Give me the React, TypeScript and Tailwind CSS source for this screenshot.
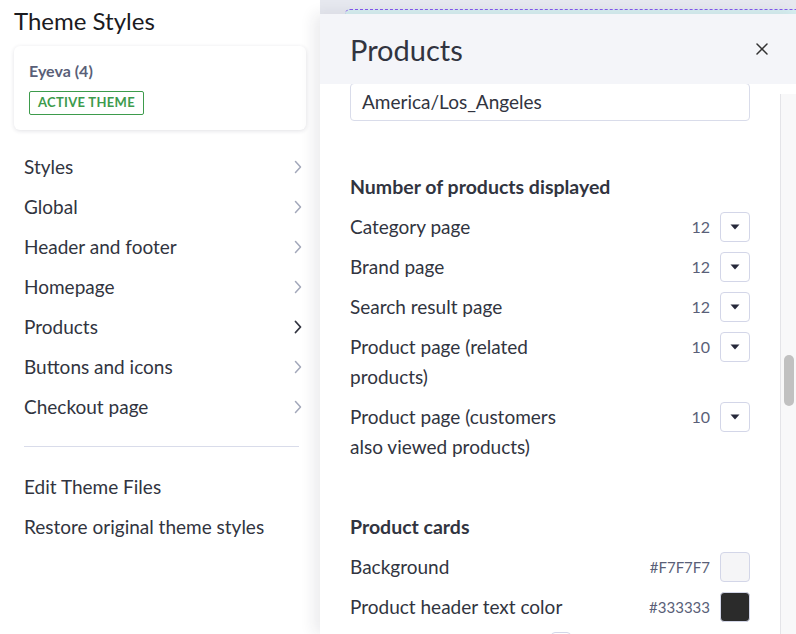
import { X } from "lucide-react";

const navItems = [
  { label: "Styles" },
  { label: "Global" },
  { label: "Header and footer" },
  { label: "Homepage" },
  { label: "Products", active: true },
  { label: "Buttons and icons" },
  { label: "Checkout page" },
];

const countRows = [
  { label: ["Category page"], value: 12 },
  { label: ["Brand page"], value: 12 },
  { label: ["Search result page"], value: 12 },
  { label: ["Product page (related", "products)"], value: 10 },
  { label: ["Product page (customers", "also viewed products)"], value: 10 },
];

function Chevron({ dark }: { dark?: boolean }) {
  return (
    <svg width="8" height="14" viewBox="0 0 8 14" fill="none">
      <path
        d="M1.5 1.5 6.5 7l-5 5.5"
        stroke={dark ? "#313440" : "#a3a8ba"}
        strokeWidth={dark ? 1.8 : 1.5}
        strokeLinecap="round"
        strokeLinejoin="round"
      />
    </svg>
  );
}

function DropButton() {
  return (
    <div className="flex h-[30px] w-[30px] items-center justify-center rounded-[4px] border border-[#d3d6e8] bg-white">
      <svg width="10" height="6" viewBox="0 0 10 6">
        <path d="M0.5 0.5h9L5 5.5z" fill="#26283a" />
      </svg>
    </div>
  );
}

function Swatch({ color }: { color: string }) {
  return <div className="h-[30px] w-[30px] rounded-[4px] border border-[#d3d6e8]" style={{ backgroundColor: color }} />;
}

export default function App() {
  return (
    <div className="flex h-[634px] w-[796px] overflow-hidden bg-white text-[#313440] [font-family:Lato,'Noto_Sans',sans-serif]">
      {/* left panel */}
      <aside className="flex w-[320px] shrink-0 flex-col bg-white">
        <h1 className="pl-[14px] pt-[4px] text-[24px] leading-[34px] text-[#1b1b1f]">Theme Styles</h1>
        <div className="mx-[14px] mt-[8px] rounded-[6px] bg-white px-[15px] pb-[15px] pt-[13px] shadow-[0_1px_4px_rgba(40,44,70,0.14)]">
          <div className="text-[16px] font-bold leading-[24px] text-[#5a5f78]">Eyeva (4)</div>
          <div className="mt-[8px] inline-flex h-[24px] items-center rounded-[2px] border border-[#3d9b4c] px-[8px] text-[13px] font-bold tracking-[0.3px] text-[#3d9b4c]">
            ACTIVE THEME
          </div>
        </div>
        <nav className="mt-[17px] flex flex-col pl-[24px] pr-[18px]">
          {navItems.map((item) => (
            <div key={item.label} className="flex h-[40px] items-center justify-between text-[19px]">
              <span>{item.label}</span>
              <Chevron dark={item.active} />
            </div>
          ))}
        </nav>
        <div className="ml-[24px] mr-[21px] mt-[19px] border-t border-[#d9dcea]" />
        <div className="mt-[20px] flex flex-col px-[24px] text-[19px]">
          <div className="flex h-[40px] items-center">Edit Theme Files</div>
          <div className="flex h-[40px] items-center">Restore original theme styles</div>
        </div>
      </aside>

      {/* right: preview behind + products drawer */}
      <div className="relative z-10 flex min-w-0 flex-1 flex-col bg-[#e6e8ef]">
        <div className="h-[14px] shrink-0 pl-[25px] pt-[9px]">
          <div className="h-[5px] rounded-tl-[6px] border-t border-dashed border-[#8656ee] bg-[#d6eef0]" />
        </div>
        <section className="flex min-h-0 flex-1 flex-col bg-white shadow-[-6px_0_14px_rgba(30,35,60,0.09)]">
          <header className="flex h-[70px] shrink-0 items-center justify-between bg-[#f4f5f9] pl-[30px] pr-[24px]">
            <h2 className="text-[29px] leading-none text-[#313440]">Products</h2>
            <X size={20} strokeWidth={1.8} className="text-[#333]" />
          </header>
          <div className="flex min-h-0 flex-1">
            <div className="min-w-0 flex-1 overflow-hidden px-[30px]">
              <div className="-mt-[1px] flex h-[38px] items-center rounded-[4px] border border-[#d9dcea] px-[11px] text-[19px]">
                America/Los_Angeles
              </div>

              <h3 className="mt-[46px] flex h-[40px] items-center text-[19.5px] font-bold">Number of products displayed</h3>
              {countRows.map((row) => (
                <div key={row.label[0]} className="flex items-start justify-between py-[5px]">
                  <div className="text-[19px] leading-[30px]">
                    {row.label.map((line) => (
                      <div key={line}>{line}</div>
                    ))}
                  </div>
                  <div className="flex h-[30px] items-center gap-[10px]">
                    <span className="text-[16px] text-[#5a5f78]">{row.value}</span>
                    <DropButton />
                  </div>
                </div>
              ))}

              <h3 className="mt-[40px] flex h-[40px] items-center text-[19.5px] font-bold">Product cards</h3>
              <div className="flex h-[40px] items-center justify-between">
                <span className="text-[19px]">Background</span>
                <div className="flex items-center gap-[10px]">
                  <span className="text-[15px] text-[#5a5f78]">#F7F7F7</span>
                  <Swatch color="#f5f5f7" />
                </div>
              </div>
              <div className="flex h-[40px] items-center justify-between">
                <span className="text-[19px]">Product header text color</span>
                <div className="flex items-center gap-[10px]">
                  <span className="text-[15px] text-[#5a5f78]">#333333</span>
                  <Swatch color="#2b2b2b" />
                </div>
              </div>
              <div className="flex h-[40px] items-center">
                <div className="ml-[201px] h-[30px] w-[20px] rounded-[4px] border border-[#d3d6e8]" />
              </div>
            </div>
            {/* scrollbar */}
            <div className="mt-[10px] w-[16px] shrink-0 border-l border-[#e4e4e8] bg-[#f8f8f9] pt-[261px]">
              <div className="mx-auto h-[51px] w-[10px] rounded-full bg-[#c1c1c1]" />
            </div>
          </div>
        </section>
      </div>
    </div>
  );
}
